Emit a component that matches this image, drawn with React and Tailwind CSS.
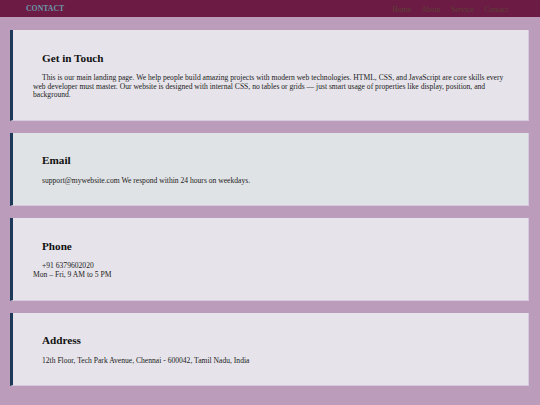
export default function App() {
  const cards = [
    {
      title: "Get in Touch",
      bg: "bg-[#e6e4ea]",
      body: (
        <>
          This is our main landing page. We help people build amazing projects with modern web technologies. HTML, CSS, and JavaScript are core skills every web developer must master. Our website is designed with internal CSS, no tables or grids — just smart usage of properties like display, position, and background.
        </>
      ),
    },
    {
      title: "Email",
      bg: "bg-[#e0e3e5]",
      body: <>support@mywebsite.com We respond within 24 hours on weekdays.</>,
    },
    {
      title: "Phone",
      bg: "bg-[#e6e4ea]",
      body: (
        <>
          +91 6379602020
          <br />
          Mon – Fri, 9 AM to 5 PM
        </>
      ),
    },
    {
      title: "Address",
      bg: "bg-[#e6e4ea]",
      body: <>12th Floor, Tech Park Avenue, Chennai - 600042, Tamil Nadu, India</>,
    },
  ]

  return (
    <div className="min-h-[405px] bg-[#bb9cbb] font-['Liberation_Serif',serif]">
      {/* Nav */}
      <nav className="h-[17px] bg-[#6c1b45] flex items-center justify-between pl-[26px] pr-[32px]">
        <span className="text-[7.75px] font-bold text-[#6b98a6] leading-none">CONTACT</span>
        <ul className="flex gap-[10.5px] text-[7.6px] text-[#5c4234] leading-none pt-[2px]">
          <li>Home</li>
          <li>About</li>
          <li>Service</li>
          <li>Contact</li>
        </ul>
      </nav>

      {/* Cards */}
      <main className="flex flex-col gap-[12px] pt-[13px] pb-[19px] ml-[10px] mr-[11px]">
        {cards.map((card) => (
          <section
            key={card.title}
            className={`${card.bg} border-l-[3px] border-[#1e3a5a] border-r border-r-[#d8cade] border-b border-b-[#d8cade] px-[20px] pt-[20.5px] pb-[20px]`}
          >
            <h2 className="text-[11.2px] font-bold text-[#111] leading-[15px] indent-[9px] mb-[8.5px]">
              {card.title}
            </h2>
            <p className="text-[7.6px] leading-[8.6px] text-[#222] indent-[9px]">{card.body}</p>
          </section>
        ))}
      </main>
    </div>
  )
}
